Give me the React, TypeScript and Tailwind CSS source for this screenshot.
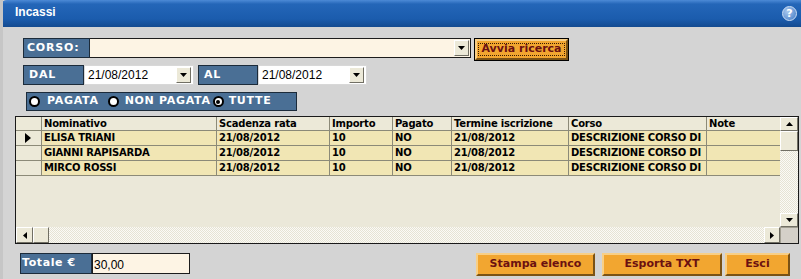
import { ReactNode } from 'react';

const rows = [
    { nome: 'ELISA TRIANI', scad: '21/08/2012', imp: '10', pag: 'NO', term: '21/08/2012', corso: 'DESCRIZIONE CORSO DI', note: '' },
    { nome: 'GIANNI RAPISARDA', scad: '21/08/2012', imp: '10', pag: 'NO', term: '21/08/2012', corso: 'DESCRIZIONE CORSO DI', note: '' },
    { nome: 'MIRCO ROSSI', scad: '21/08/2012', imp: '10', pag: 'NO', term: '21/08/2012', corso: 'DESCRIZIONE CORSO DI', note: '' },
];

const cols = 'grid grid-cols-[26px_175px_113px_63px_59px_117px_138px_73px]';

const Arrow = ({ dir }: { dir: 'up' | 'down' | 'left' | 'right' }) => {
    const pts = {
        up: '0,4 7,4 3.5,0',
        down: '0,0 7,0 3.5,4',
        left: '4,0 4,7 0,3.5',
        right: '0,0 0,7 4,3.5',
    }[dir];
    const w = dir === 'up' || dir === 'down' ? 7 : 4;
    const h = dir === 'up' || dir === 'down' ? 4 : 7;
    return (
        <svg width={w} height={h} viewBox={`0 0 ${w} ${h}`}>
            <polygon points={pts} fill="#000" />
        </svg>
    );
};

// small 3D gray button used by combos and scrollbars
const Btn3D = ({ className, children }: { className: string; children?: ReactNode }) => (
    <div className={`flex items-center justify-center bg-[#ece9d8] border border-t-white border-l-white border-r-[#716f64] border-b-[#716f64] ${className}`}>
        {children}
    </div>
);

const Label = ({ text, className }: { text: string; className: string }) => (
    <div className={`flex items-start bg-[#4a6f95] border border-[#1c2b3a] text-white font-bold text-[11px] font-['DejaVu_Sans',sans-serif] tracking-[0.8px] pl-[3px] pt-[1px] ${className}`}>
        {text}
    </div>
);

const OrangeBtn = ({ text, className }: { text: string; className: string }) => (
    <div className={`flex items-center justify-center bg-[#f2a630] border-2 border-t-[#f8cf86] border-l-[#f8cf86] border-r-[#7a5215] border-b-[#7a5215] text-[#6b1111] font-bold text-[11px] font-['DejaVu_Sans',sans-serif] ${className}`}>
        {text}
    </div>
);

const Radio = ({ checked }: { checked?: boolean }) => (
    <div className="w-[11px] h-[11px] rounded-full bg-white border-2 border-black flex items-center justify-center">
        {checked && <div className="w-[4px] h-[4px] rounded-full bg-black" />}
    </div>
);

const Cell = ({ children, className = '' }: { children?: ReactNode; className?: string }) => (
    <div className={`border-r border-[#8c8a78] pl-[2px] leading-[14px] whitespace-nowrap overflow-hidden ${className}`}>{children}</div>
);

export default function App() {
    return (
        <div className="w-[801px] h-[279px] bg-[#d4d4d4] flex flex-col overflow-hidden border-l-[3px] border-[#c6c6c6] font-['DejaVu_Sans',sans-serif]">
            {/* Title bar */}
            <div className="h-[27px] shrink-0 -ml-[3px] rounded-tl-[7px] bg-[linear-gradient(to_bottom,#4c8ad6_0%,#2466b8_15%,#1b5cad_70%,#134a90_100%)] flex items-center justify-between pl-[15px] pr-[4px]">
                <span className="text-white font-bold text-[12px] font-['Liberation_Sans',sans-serif] -mt-[3px]">Incassi</span>
                <div className="w-[15px] h-[15px] rounded-full bg-[radial-gradient(circle_at_35%_35%,#a9c8ee,#3f78c4)] border border-[#cfe0f5] flex items-center justify-center text-white font-bold text-[11px] leading-none -mt-[1px]">?</div>
            </div>

            {/* Row 1: corso */}
            <div className="flex items-start mt-[11px] ml-[20px] h-[22px]">
                <Label text="CORSO:" className="w-[67px] h-[20px]" />
                <div className="w-[381px] h-[20px] bg-[#fdf4e4] border border-[#1c1c1c] border-l-0 flex justify-end items-center pr-[1px]">
                    <Btn3D className="w-[15px] h-[16px]"><Arrow dir="down" /></Btn3D>
                </div>
                <div className="ml-[3px] w-[95px] h-[23px] border border-black">
                    <OrangeBtn text="Avvia ricerca" className="w-full h-full relative" />
                    <div className="relative -mt-[17px] mx-[3px] h-[13px] border border-dotted border-[#3a1a00]" />
                </div>
            </div>

            {/* Row 2: date */}
            <div className="flex items-start mt-[5px] ml-[20px] h-[20px]">
                <Label text="DAL" className="w-[61px] h-[20px] pl-[5px]" />
                <div className="w-[110px] h-[20px] bg-white border border-[#d8d8d8] flex items-center justify-between pl-[3px] pr-[2px]">
                    <span className="text-[12px] text-black font-['Liberation_Sans',sans-serif]">21/08/2012</span>
                    <Btn3D className="w-[15px] h-[16px]"><Arrow dir="down" /></Btn3D>
                </div>
                <Label text="AL" className="ml-[4px] w-[60px] h-[20px] pl-[5px]" />
                <div className="w-[109px] h-[20px] bg-white border border-[#d8d8d8] flex items-center justify-between pl-[3px] pr-[2px]">
                    <span className="text-[12px] text-black font-['Liberation_Sans',sans-serif]">21/08/2012</span>
                    <Btn3D className="w-[15px] h-[16px]"><Arrow dir="down" /></Btn3D>
                </div>
            </div>

            {/* Row 3: radio */}
            <div className="flex mt-[7px] ml-[23px]">
                <div className="w-[271px] h-[19px] bg-[#4a6f95] border border-[#1c2b3a] flex items-center pl-[2px] text-white font-bold text-[11px] tracking-[0.7px]">
                    <Radio />
                    <span className="ml-[7px]">PAGATA</span>
                    <div className="ml-[9px]"><Radio /></div>
                    <span className="ml-[6px]">NON PAGATA</span>
                    <div className="ml-[2px]"><Radio checked /></div>
                    <span className="ml-[5px]">TUTTE</span>
                </div>
            </div>

            {/* Grid */}
            <div className="mt-[5px] ml-[12px] w-[784px] h-[128px] border border-[#1a1a1a] flex flex-col bg-[#ebe8d9] text-[10px] font-bold tracking-[-0.2px] text-black">
                <div className="flex flex-1 min-h-0">
                    <div className="w-[764px] flex flex-col">
                        <div className={`${cols} h-[14px] bg-[#ece9d8] border-b border-[#8c8a78]`}>
                            <Cell />
                            <Cell>Nominativo</Cell>
                            <Cell>Scadenza rata</Cell>
                            <Cell>Importo</Cell>
                            <Cell>Pagato</Cell>
                            <Cell>Termine iscrizione</Cell>
                            <Cell>Corso</Cell>
                            <Cell className="border-r-0">Note</Cell>
                        </div>
                        {rows.map((r, i) => (
                            <div key={i} className={`${cols} h-[15px]`}>
                                <div className="bg-[#ece9d8] border-r border-b border-[#8c8a78] flex items-center pl-[9px]">
                                    {i === 0 && (
                                        <svg width="6" height="10" viewBox="0 0 6 10">
                                            <polygon points="0,0 0,10 6,5" fill="#000" />
                                        </svg>
                                    )}
                                </div>
                                <Cell className="bg-[#f1e6b4] border-b">{r.nome}</Cell>
                                <Cell className="bg-[#f1e6b4] border-b">{r.scad}</Cell>
                                <Cell className="bg-[#f1e6b4] border-b">{r.imp}</Cell>
                                <Cell className="bg-[#f1e6b4] border-b">{r.pag}</Cell>
                                <Cell className="bg-[#f1e6b4] border-b">{r.term}</Cell>
                                <Cell className="bg-[#f1e6b4] border-b">{r.corso}</Cell>
                                <Cell className="bg-[#f1e6b4] border-b border-r-0">{r.note}</Cell>
                            </div>
                        ))}
                    </div>
                    {/* vertical scrollbar */}
                    <div className="w-[18px] flex flex-col bg-[repeating-conic-gradient(#e6e3d4_0_25%,#fbfaf6_0_50%)] bg-[length:2px_2px]">
                        <Btn3D className="h-[14px] shrink-0"><Arrow dir="up" /></Btn3D>
                        <Btn3D className="h-[20px] shrink-0" />
                        <div className="flex-1" />
                        <Btn3D className="h-[14px] shrink-0"><Arrow dir="down" /></Btn3D>
                    </div>
                </div>
                {/* horizontal scrollbar */}
                <div className="flex h-[16px] shrink-0">
                    <div className="w-[764px] flex bg-[repeating-conic-gradient(#e6e3d4_0_25%,#fbfaf6_0_50%)] bg-[length:2px_2px]">
                        <Btn3D className="w-[17px] shrink-0"><Arrow dir="left" /></Btn3D>
                        <Btn3D className="w-[16px] shrink-0" />
                        <div className="flex-1" />
                        <Btn3D className="w-[16px] shrink-0"><Arrow dir="right" /></Btn3D>
                    </div>
                    <div className="w-[18px] bg-[#d4d0c8] border-t border-l border-[#a09d90]" />
                </div>
            </div>

            {/* Bottom bar */}
            <div className="flex items-start mt-[9px] ml-[17px]">
                <div className="flex h-[21px]">
                    <div className="w-[72px] h-[21px] bg-[#4a6f95] border border-[#1c2b3a] text-white font-bold text-[11px] tracking-[0.6px] pl-[1px] pt-[1px]">Totale €</div>
                    <div className="w-[98px] h-[21px] bg-[#fdf4e4] border border-[#1c1c1c] text-[12px] font-['Liberation_Sans',sans-serif] pl-[1px] pt-[2px]">30,00</div>
                </div>
                <OrangeBtn text="Stampa elenco" className="ml-[286px] w-[119px] h-[23px]" />
                <OrangeBtn text="Esporta TXT" className="ml-[7px] w-[120px] h-[23px]" />
                <OrangeBtn text="Esci" className="ml-[3px] w-[65px] h-[23px]" />
            </div>
        </div>
    );
}
